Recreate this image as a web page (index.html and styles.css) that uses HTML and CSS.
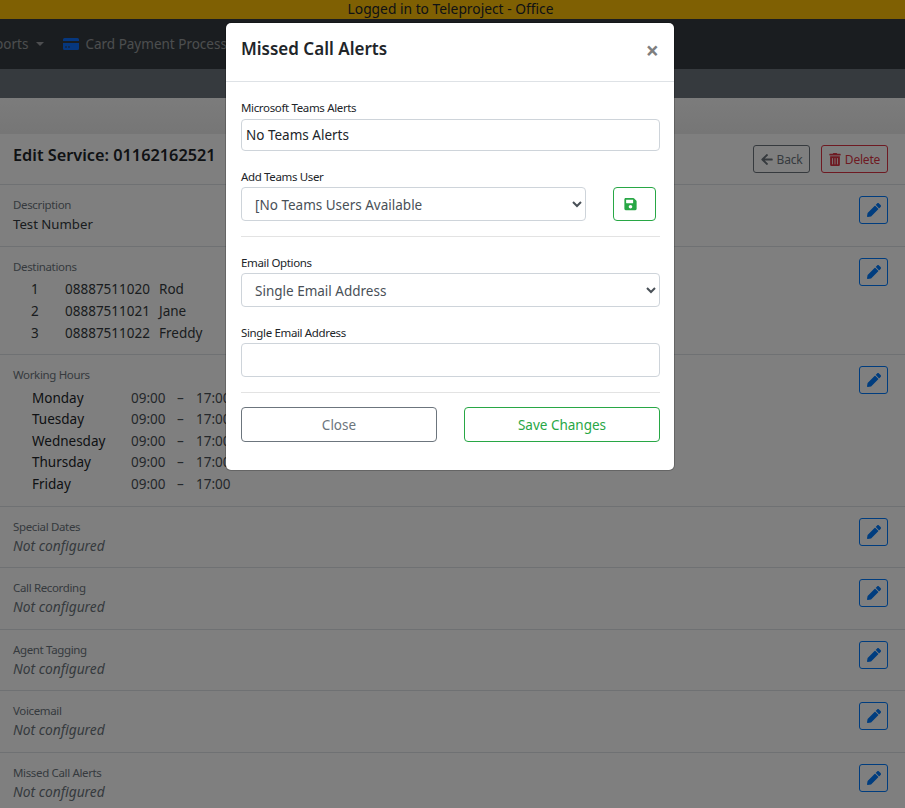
FILE: index.html
```html
<!DOCTYPE html>
<html>
<head>
    <meta charset="utf-8">
    <title>Edit Service</title>
    <link rel="stylesheet" href="styles.css">
</head>
<body>
    <div class="login-bar">Logged in to Teleproject - Office</div>
    <nav class="navbar">
        <span class="nav-item nav-reports">Reports <i class="caret"></i></span>
        <span class="nav-item">
            <svg class="card-icon" viewBox="0 0 16 12"><path fill="#0d6efd" d="M0 1.5A1.5 1.5 0 0 1 1.5 0h13A1.5 1.5 0 0 1 16 1.5V3H0zM0 5h16v5.5a1.5 1.5 0 0 1-1.5 1.5h-13A1.5 1.5 0 0 1 0 10.5zM2 8.5v1h2v-1zm3 0v1h2v-1z"/></svg>
            Card Payment Processing
        </span>
    </nav>
    <div class="subbar"></div>
    <div class="spacer"></div>

    <main class="card">
        <div class="card-header">
            <h2>Edit Service: 01162162521</h2>
            <div class="actions">
                <button class="btn btn-back">
                    <svg class="icon" viewBox="0 0 448 512"><path fill="currentColor" d="M257.5 445.1l-22.2 22.2c-9.4 9.4-24.6 9.4-33.9 0L7 273c-9.4-9.4-9.4-24.6 0-33.9L201.4 44.7c9.4-9.4 24.6-9.4 33.9 0l22.2 22.2c9.5 9.5 9.3 25-.4 34.3L136.6 216H424c13.3 0 24 10.7 24 24v32c0 13.3-10.7 24-24 24H136.6l120.5 114.8c9.8 9.3 10 24.8.4 34.3z"/></svg>
                    Back
                </button>
                <button class="btn btn-delete">
                    <svg class="icon" viewBox="0 0 448 512"><path fill="currentColor" d="M32 464a48 48 0 0 0 48 48h288a48 48 0 0 0 48-48V128H32zm272-256a16 16 0 0 1 32 0v224a16 16 0 0 1-32 0zm-96 0a16 16 0 0 1 32 0v224a16 16 0 0 1-32 0zm-96 0a16 16 0 0 1 32 0v224a16 16 0 0 1-32 0zM432 32H312l-9.4-18.7A24 24 0 0 0 281.1 0H166.8a23.7 23.7 0 0 0-21.4 13.3L136 32H16A16 16 0 0 0 0 48v32a16 16 0 0 0 16 16h416a16 16 0 0 0 16-16V48a16 16 0 0 0-16-16z"/></svg>
                    Delete
                </button>
            </div>
        </div>

        <section class="row row-1">
            <div>
                <div class="label">Description</div>
                <div class="value">Test Number</div>
            </div>
            <button class="btn-edit"><svg class="icon" viewBox="0 0 512 512"><path fill="currentColor" d="M497.9 142.1l-46.1 46.1c-4.7 4.7-12.3 4.7-17 0l-111-111c-4.7-4.7-4.7-12.3 0-17l46.1-46.1c18.7-18.7 49.1-18.7 67.9 0l60.1 60.1c18.8 18.7 18.8 49.1 0 67.9zM284.2 99.8L21.6 362.4.4 483.9c-2.9 16.4 11.4 30.6 27.8 27.8l121.5-21.3 262.6-262.6c4.7-4.7 4.7-12.3 0-17l-111-111c-4.8-4.7-12.4-4.7-17.1 0z"/></svg></button>
        </section>

        <section class="row row-dest">
            <div>
                <div class="label">Destinations</div>
                <div class="dest-list">
                    <span>1</span><span>08887511020</span><span>Rod</span>
                    <span>2</span><span>08887511021</span><span>Jane</span>
                    <span>3</span><span>08887511022</span><span>Freddy</span>
                </div>
            </div>
            <button class="btn-edit"><svg class="icon" viewBox="0 0 512 512"><path fill="currentColor" d="M497.9 142.1l-46.1 46.1c-4.7 4.7-12.3 4.7-17 0l-111-111c-4.7-4.7-4.7-12.3 0-17l46.1-46.1c18.7-18.7 49.1-18.7 67.9 0l60.1 60.1c18.8 18.7 18.8 49.1 0 67.9zM284.2 99.8L21.6 362.4.4 483.9c-2.9 16.4 11.4 30.6 27.8 27.8l121.5-21.3 262.6-262.6c4.7-4.7 4.7-12.3 0-17l-111-111c-4.8-4.7-12.4-4.7-17.1 0z"/></svg></button>
        </section>

        <section class="row row-hours">
            <div>
                <div class="label">Working Hours</div>
                <div class="hours-list">
                    <span class="day">Monday</span><span>09:00</span><span>–</span><span>17:00</span>
                    <span class="day">Tuesday</span><span>09:00</span><span>–</span><span>17:00</span>
                    <span class="day">Wednesday</span><span>09:00</span><span>–</span><span>17:00</span>
                    <span class="day">Thursday</span><span>09:00</span><span>–</span><span>17:00</span>
                    <span class="day">Friday</span><span>09:00</span><span>–</span><span>17:00</span>
                </div>
            </div>
            <button class="btn-edit"><svg class="icon" viewBox="0 0 512 512"><path fill="currentColor" d="M497.9 142.1l-46.1 46.1c-4.7 4.7-12.3 4.7-17 0l-111-111c-4.7-4.7-4.7-12.3 0-17l46.1-46.1c18.7-18.7 49.1-18.7 67.9 0l60.1 60.1c18.8 18.7 18.8 49.1 0 67.9zM284.2 99.8L21.6 362.4.4 483.9c-2.9 16.4 11.4 30.6 27.8 27.8l121.5-21.3 262.6-262.6c4.7-4.7 4.7-12.3 0-17l-111-111c-4.8-4.7-12.4-4.7-17.1 0z"/></svg></button>
        </section>

        <section class="row row-1">
            <div>
                <div class="label">Special Dates</div>
                <div class="value none">Not configured</div>
            </div>
            <button class="btn-edit"><svg class="icon" viewBox="0 0 512 512"><path fill="currentColor" d="M497.9 142.1l-46.1 46.1c-4.7 4.7-12.3 4.7-17 0l-111-111c-4.7-4.7-4.7-12.3 0-17l46.1-46.1c18.7-18.7 49.1-18.7 67.9 0l60.1 60.1c18.8 18.7 18.8 49.1 0 67.9zM284.2 99.8L21.6 362.4.4 483.9c-2.9 16.4 11.4 30.6 27.8 27.8l121.5-21.3 262.6-262.6c4.7-4.7 4.7-12.3 0-17l-111-111c-4.8-4.7-12.4-4.7-17.1 0z"/></svg></button>
        </section>
        <section class="row row-1">
            <div>
                <div class="label">Call Recording</div>
                <div class="value none">Not configured</div>
            </div>
            <button class="btn-edit"><svg class="icon" viewBox="0 0 512 512"><path fill="currentColor" d="M497.9 142.1l-46.1 46.1c-4.7 4.7-12.3 4.7-17 0l-111-111c-4.7-4.7-4.7-12.3 0-17l46.1-46.1c18.7-18.7 49.1-18.7 67.9 0l60.1 60.1c18.8 18.7 18.8 49.1 0 67.9zM284.2 99.8L21.6 362.4.4 483.9c-2.9 16.4 11.4 30.6 27.8 27.8l121.5-21.3 262.6-262.6c4.7-4.7 4.7-12.3 0-17l-111-111c-4.8-4.7-12.4-4.7-17.1 0z"/></svg></button>
        </section>
        <section class="row row-1">
            <div>
                <div class="label">Agent Tagging</div>
                <div class="value none">Not configured</div>
            </div>
            <button class="btn-edit"><svg class="icon" viewBox="0 0 512 512"><path fill="currentColor" d="M497.9 142.1l-46.1 46.1c-4.7 4.7-12.3 4.7-17 0l-111-111c-4.7-4.7-4.7-12.3 0-17l46.1-46.1c18.7-18.7 49.1-18.7 67.9 0l60.1 60.1c18.8 18.7 18.8 49.1 0 67.9zM284.2 99.8L21.6 362.4.4 483.9c-2.9 16.4 11.4 30.6 27.8 27.8l121.5-21.3 262.6-262.6c4.7-4.7 4.7-12.3 0-17l-111-111c-4.8-4.7-12.4-4.7-17.1 0z"/></svg></button>
        </section>
        <section class="row row-1">
            <div>
                <div class="label">Voicemail</div>
                <div class="value none">Not configured</div>
            </div>
            <button class="btn-edit"><svg class="icon" viewBox="0 0 512 512"><path fill="currentColor" d="M497.9 142.1l-46.1 46.1c-4.7 4.7-12.3 4.7-17 0l-111-111c-4.7-4.7-4.7-12.3 0-17l46.1-46.1c18.7-18.7 49.1-18.7 67.9 0l60.1 60.1c18.8 18.7 18.8 49.1 0 67.9zM284.2 99.8L21.6 362.4.4 483.9c-2.9 16.4 11.4 30.6 27.8 27.8l121.5-21.3 262.6-262.6c4.7-4.7 4.7-12.3 0-17l-111-111c-4.8-4.7-12.4-4.7-17.1 0z"/></svg></button>
        </section>
        <section class="row row-1">
            <div>
                <div class="label">Missed Call Alerts</div>
                <div class="value none">Not configured</div>
            </div>
            <button class="btn-edit"><svg class="icon" viewBox="0 0 512 512"><path fill="currentColor" d="M497.9 142.1l-46.1 46.1c-4.7 4.7-12.3 4.7-17 0l-111-111c-4.7-4.7-4.7-12.3 0-17l46.1-46.1c18.7-18.7 49.1-18.7 67.9 0l60.1 60.1c18.8 18.7 18.8 49.1 0 67.9zM284.2 99.8L21.6 362.4.4 483.9c-2.9 16.4 11.4 30.6 27.8 27.8l121.5-21.3 262.6-262.6c4.7-4.7 4.7-12.3 0-17l-111-111c-4.8-4.7-12.4-4.7-17.1 0z"/></svg></button>
        </section>
    </main>

    <div class="backdrop"></div>

    <div class="modal">
        <div class="modal-header">
            <h3>Missed Call Alerts</h3>
            <span class="close-x">×</span>
        </div>
        <div class="modal-body">
            <label class="field-label label-teams">Microsoft Teams Alerts</label>
            <div class="input input-plain">No Teams Alerts</div>

            <label class="field-label label-add">Add Teams User</label>
            <div class="add-row">
                <select class="select select-teams"><option>[No Teams Users Available</option></select>
                <button class="btn-save">
                    <svg class="icon" viewBox="0 0 448 512"><path fill="currentColor" d="M433.9 129.9l-83.9-83.9A48 48 0 0 0 316.1 32H48C21.5 32 0 53.5 0 80v352c0 26.5 21.5 48 48 48h352c26.5 0 48-21.5 48-48V163.9a48 48 0 0 0-14.1-34zM224 416c-35.3 0-64-28.7-64-64 0-35.3 28.7-64 64-64s64 28.7 64 64c0 35.3-28.7 64-64 64zm96-304.5V212c0 6.6-5.4 12-12 12H76c-6.6 0-12-5.4-12-12V108c0-6.6 5.4-12 12-12h228.5c3.2 0 6.2 1.3 8.5 3.5l3.5 3.5c2.2 2.2 3.5 5.3 3.5 8.5z"/></svg>
                </button>
            </div>
            <hr class="divider divider-a">

            <label class="field-label">Email Options</label>
            <select class="select"><option>Single Email Address</option></select>

            <label class="field-label label-single">Single Email Address</label>
            <input class="input" type="text">
            <hr class="divider divider-b">

            <div class="footer-btns">
                <button class="btn-wide btn-close">Close</button>
                <button class="btn-wide btn-changes">Save Changes</button>
            </div>
        </div>
    </div>
</body>
</html>
```

FILE: styles.css
```css
* {
    margin: 0;
    padding: 0;
    box-sizing: border-box;
}
html, body {
    height: 808px;
    overflow: hidden;
}
body {
    position: relative;
    background-color: #fff;
    color: #212529;
    font-family: "Noto Sans", "Open Sans", sans-serif;
    font-size: 13.5px;
}
.login-bar {
    height: 19px;
    line-height: 17px;
    padding-right: 4px;
    background-color: #ffc107;
    color: #212529;
    text-align: center;
    font-size: 13.8px;
}
.navbar {
    height: 50px;
    background-color: #343a40;
    display: flex;
    align-items: center;
    color: rgba(255,255,255,0.5);
    overflow: hidden;
    white-space: nowrap;
}
.nav-item {
    display: inline-flex;
    align-items: center;
    gap: 6px;
    font-size: 13.5px;
}
.nav-reports {
    margin-left: -21px;
    margin-right: 13px;
}
.caret {
    display: inline-block;
    margin-left: 2px;
    border-top: 4px solid currentColor;
    border-left: 4px solid transparent;
    border-right: 4px solid transparent;
}
.card-icon {
    width: 16px;
    height: 12px;
    margin-left: 6px;
}
.subbar {
    height: 29px;
    background-color: #6c757d;
}
.spacer {
    height: 36px;
    background: linear-gradient(#f8f8f8, #ececec);
}
.card {
    background-color: #fff;
}
.card-header {
    height: 51px;
    padding: 0 17px 0 13px;
    display: flex;
    justify-content: space-between;
    align-items: center;
    border-bottom: 1px solid #dee2e6;
}
.card-header h2 {
    font-size: 16.3px;
    font-weight: 600;
    padding-bottom: 8px;
}
.actions {
    display: flex;
    gap: 11px;
}
.btn {
    height: 28px;
    padding: 0;
    background: transparent;
    border-radius: 3px;
    font-family: inherit;
    font-size: 12px;
    letter-spacing: -0.2px;
    display: flex;
    align-items: center;
    justify-content: center;
    gap: 4px;
}
.btn .icon {
    width: 12px;
    height: 13px;
}
.btn-back {
    width: 57px;
    border: 1px solid #6c757d;
    color: #6c757d;
}
.btn-delete {
    width: 67px;
    border: 1px solid #dc3545;
    color: #dc3545;
}
.row {
    display: flex;
    justify-content: space-between;
    align-items: flex-start;
    padding: 11px 17px 0 13px;
    border-bottom: 1px solid #dee2e6;
}
.row-1 {
    height: 61.6px;
}
.row-dest {
    height: 108px;
}
.row-hours {
    height: 152px;
}
.label {
    font-size: 11.5px;
    letter-spacing: -0.35px;
    line-height: 18px;
    color: #6c757d;
}
.value {
    font-size: 13.2px;
    line-height: 20px;
    color: #343a40;
}
.none {
    font-size: 13.8px;
    font-style: italic;
    color: #6c757d;
}
.dest-list {
    display: grid;
    grid-template-columns: 34px 94px auto;
    margin-left: 18px;
    margin-top: 2px;
    line-height: 22px;
    color: #343a40;
}
.hours-list {
    display: grid;
    grid-template-columns: 99px 46px 19px auto;
    margin-left: 19px;
    margin-top: 4px;
    line-height: 21.5px;
    color: #495057;
}
.day {
    color: #212529;
}
.btn-edit {
    width: 29px;
    height: 28px;
    border: 1px solid #007bff;
    border-radius: 3px;
    background: transparent;
    color: #007bff;
    display: flex;
    align-items: center;
    justify-content: center;
}
.btn-edit .icon {
    width: 14px;
    height: 14px;
}
.backdrop {
    position: absolute;
    top: 0;
    left: 0;
    width: 100%;
    height: 100%;
    background-color: rgba(0,0,0,0.5);
}
.modal {
    position: absolute;
    top: 23px;
    left: 226px;
    width: 448px;
    height: 447px;
    background-color: #fff;
    border-radius: 5px;
    box-shadow: 0 0 0 1px rgba(0,0,0,0.2);
}
.modal-header {
    height: 59px;
    padding: 0 15px;
    display: flex;
    justify-content: space-between;
    align-items: center;
    border-bottom: 1px solid #dee2e6;
}
.modal-header h3 {
    font-size: 17px;
    font-weight: 600;
    color: #212529;
    padding-bottom: 8px;
}
.close-x {
    font-size: 23px;
    font-weight: 700;
    color: #7f7f7f;
    padding-bottom: 4px;
}
.modal-body {
    padding: 18px 14px 0 15px;
}
.field-label {
    display: block;
    font-size: 11.5px;
    letter-spacing: -0.35px;
    line-height: 16px;
    padding-bottom: 2px;
    color: #212529;
}
.label-teams {
    margin-bottom: 1px;
}
.input {
    display: block;
    width: 100%;
    border: 1px solid #ced4da;
    border-radius: 4px;
    height: 34px;
    background-color: #fff;
}
.input-plain {
    height: 32px;
    line-height: 30px;
    padding-left: 4px;
    color: #212529;
}
.label-add {
    margin-top: 18px;
}
.add-row {
    display: flex;
    justify-content: space-between;
    padding-right: 4px;
}
.select {
    display: block;
    width: 100%;
    height: 34px;
    padding-left: 9px;
    padding-top: 2px;
    border: 1px solid #ced4da;
    border-radius: 4px;
    background-color: #fff;
    font-family: inherit;
    font-size: 13.5px;
    color: #495057;
}
.select-teams {
    width: 345px;
}
.btn-save {
    width: 43px;
    height: 34px;
    padding-right: 8px;
    border: 1px solid #28a745;
    border-radius: 4px;
    background: #fff;
    color: #28a745;
    display: flex;
    align-items: center;
    justify-content: center;
}
.btn-save .icon {
    width: 13px;
    height: 14px;
}
.divider {
    border: none;
    border-top: 1px solid #e3e3e3;
}
.divider-a {
    margin: 15px 0 18px;
}
.divider-b {
    margin: 15px 0 14px;
}
.label-single {
    margin-top: 18px;
}
.footer-btns {
    display: flex;
    justify-content: space-between;
}
.btn-wide {
    width: 196px;
    height: 35px;
    border-radius: 4px;
    background: #fff;
    font-family: inherit;
    font-size: 13.5px;
}
.btn-close {
    border: 1px solid #6c757d;
    color: #6c757d;
}
.btn-changes {
    border: 1px solid #28a745;
    color: #28a745;
}
```
